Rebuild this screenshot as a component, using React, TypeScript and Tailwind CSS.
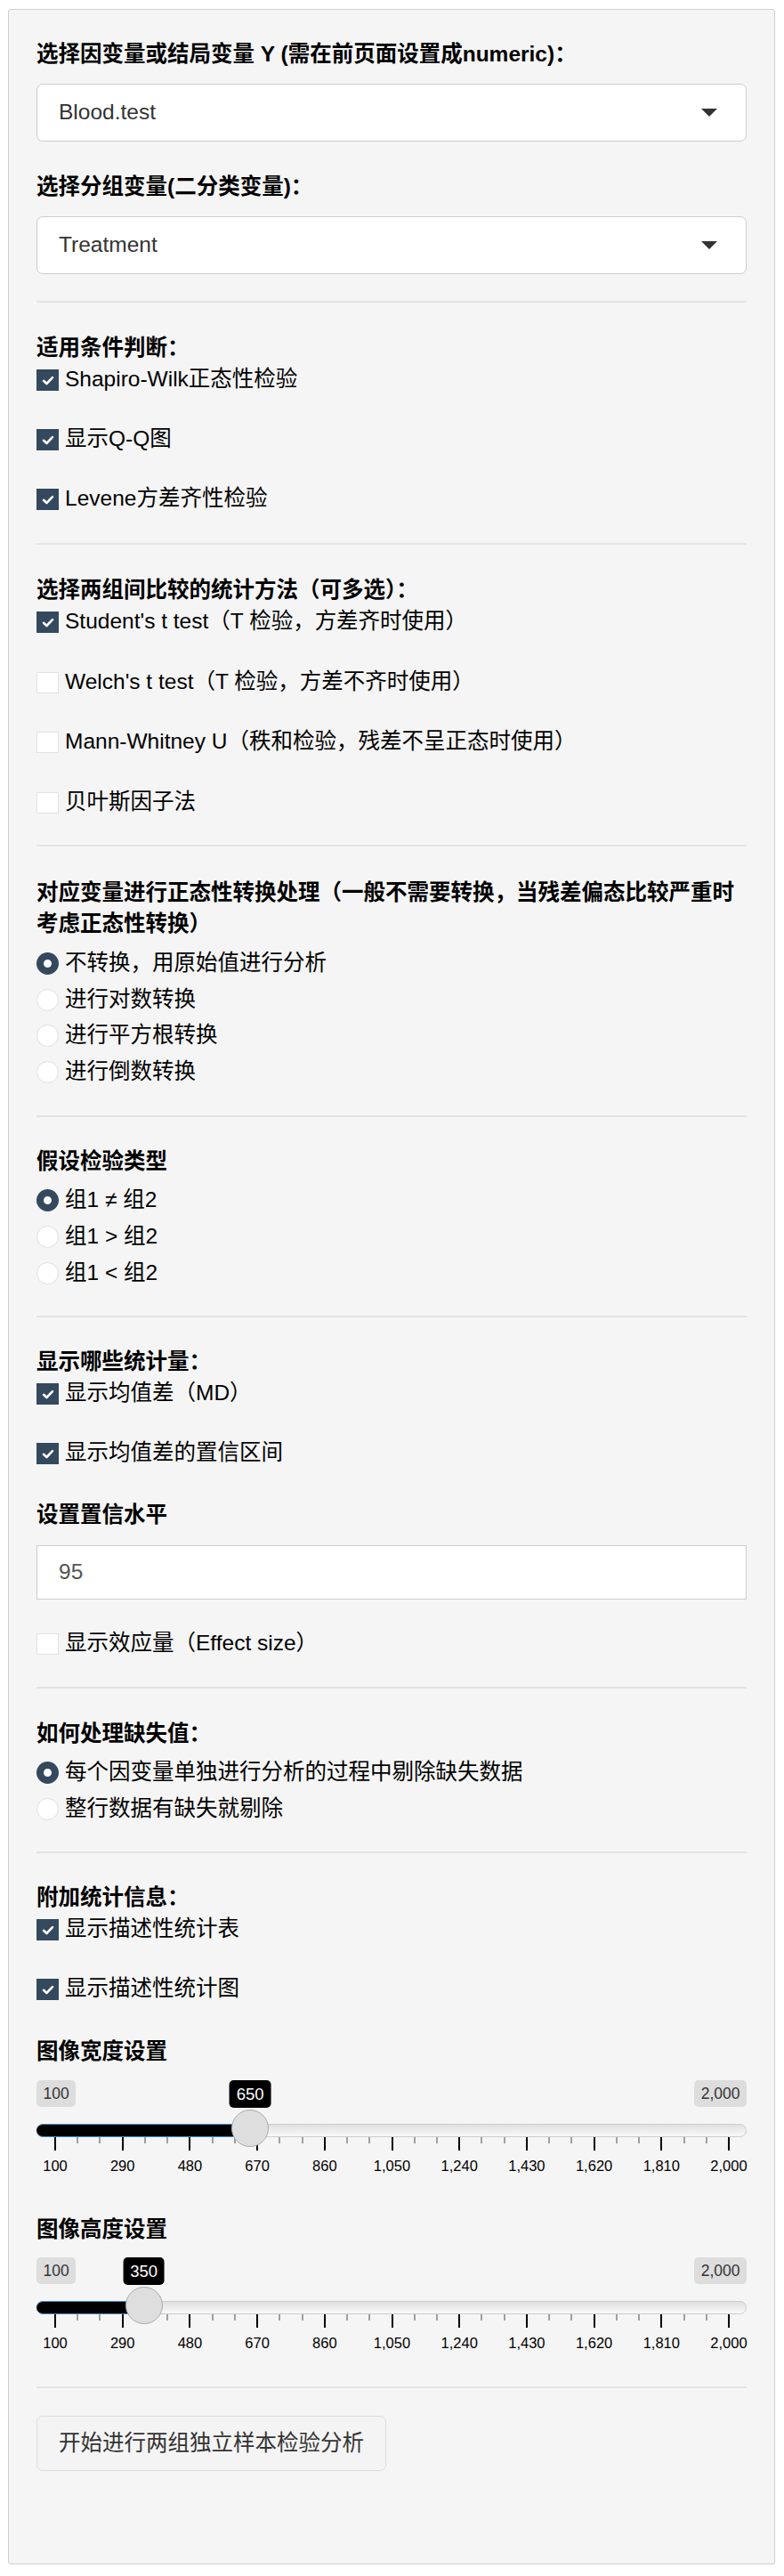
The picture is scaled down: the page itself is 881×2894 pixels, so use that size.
import React from 'react'

const ticks = ['100', '290', '480', '670', '860', '1,050', '1,240', '1,430', '1,620', '1,810', '2,000']

function Heading({ children, className = '' }: { children: React.ReactNode; className?: string }) {
  return <div className={`text-[24.5px] leading-[35px] font-bold text-black ${className}`}>{children}</div>
}

function Rule({ className = '' }: { className?: string }) {
  return <div className={`h-[2px] bg-[#e3e3e3] ${className}`} />
}

function Check({ label, checked }: { label: string; checked?: boolean }) {
  return (
    <div className="flex items-start gap-[7px] h-[35px]">
      <span
        className={`mt-[7px] w-[25px] h-[24px] shrink-0 flex items-center justify-center ${
          checked ? 'bg-[#34495e]' : 'bg-white border border-[#e2e2e2]'
        }`}
      >
        {checked && (
          <svg width="14" height="11" viewBox="0 0 14 11">
            <path d="M2 5.8 L5.4 9 L12 2.2" fill="none" stroke="white" strokeWidth="2.6" strokeLinecap="round" strokeLinejoin="round" />
          </svg>
        )}
      </span>
      <span className="text-[24.5px] leading-[35px] text-black whitespace-nowrap">{label}</span>
    </div>
  )
}

function Radio({ label, on }: { label: string; on?: boolean }) {
  return (
    <div className="flex items-start gap-[7px] h-[35px]">
      <span
        className={`mt-[6px] w-[25px] h-[25px] shrink-0 rounded-full bg-white ${
          on ? 'border-[8px] border-[#34495e]' : 'border border-[#e0e0e0]'
        }`}
      />
      <span className="text-[24.5px] leading-[35px] text-black whitespace-nowrap">{label}</span>
    </div>
  )
}

function Select({ value }: { value: string }) {
  return (
    <div className="h-[65px] flex items-center justify-between bg-white border border-[#cccccc] rounded-[7px] pl-[24px] pr-[32px]">
      <span className="text-[24.5px] text-[#333333]">{value}</span>
      <svg width="18" height="9" viewBox="0 0 18 9">
        <polygon points="0,0 18,0 9,9" fill="#333333" />
      </svg>
    </div>
  )
}

function Slider({ value }: { value: number }) {
  const pos = 21 + ((value - 100) / 1900) * 757
  const step = 757 / 10
  return (
    <div className="relative h-[120px]">
      <span className="absolute left-0 top-0 h-[30px] px-[7.5px] flex items-center rounded-[5px] bg-[#dddddd] text-[17.5px] text-[#333333]">
        100
      </span>
      <span className="absolute right-0 top-0 h-[30px] px-[7.5px] flex items-center rounded-[5px] bg-[#dddddd] text-[17.5px] text-[#333333]">
        2,000
      </span>
      <div className="absolute left-0 right-0 top-[49px] h-[15px] rounded-full border border-[#cccccc] bg-linear-to-b from-[#e0e0e0] to-[#f9f9f9]" />
      <div
        className="absolute left-0 top-[49px] h-[15px] rounded-l-full bg-black border-y border-[#428bca]"
        style={{ width: pos }}
      />
      {ticks.map((t, i) => (
        <React.Fragment key={t}>
          <span className="absolute top-[64px] h-[15px] w-[2px] -translate-x-1/2 bg-black" style={{ left: 21 + i * step }} />
          <span
            className="absolute top-[88px] -translate-x-1/2 text-[16.5px] leading-none text-black whitespace-nowrap"
            style={{ left: 21 + i * step }}
          >
            {t}
          </span>
          {i < 10 && (
            <>
              <span className="absolute top-[64px] h-[7px] w-[2px] -translate-x-1/2 bg-[#a0a0a0]" style={{ left: 21 + i * step + step / 3 }} />
              <span className="absolute top-[64px] h-[7px] w-[2px] -translate-x-1/2 bg-[#a0a0a0]" style={{ left: 21 + i * step + (2 * step) / 3 }} />
            </>
          )}
        </React.Fragment>
      ))}
      <span
        className="absolute top-[33px] w-[42px] h-[42px] -translate-x-1/2 rounded-full bg-[#dedede] border border-[#ababab]"
        style={{ left: pos }}
      />
      <span
        className="absolute top-0 h-[31px] px-[8px] -translate-x-1/2 flex items-center rounded-[5px] bg-black text-white text-[18.5px]"
        style={{ left: pos }}
      >
        {value}
      </span>
    </div>
  )
}

export default function App() {
  return (
    <div className="bg-white pt-[10px] pl-[9px] pr-[10px] pb-[13px] font-['Liberation_Sans','Noto_Sans_CJK_SC',sans-serif]">
      <div className="bg-[#f5f5f5] border border-[#cfcfcf] rounded-[3px] pt-[32px] px-[31px] pb-[104px]">
        <Heading>选择因变量或结局变量 Y (需在前页面设置成numeric)：</Heading>
        <div className="mt-[16px]">
          <Select value="Blood.test" />
        </div>
        <Heading className="mt-[33px]">选择分组变量(二分类变量)：</Heading>
        <div className="mt-[16px]">
          <Select value="Treatment" />
        </div>

        <Rule className="mt-[30px]" />
        <Heading className="mt-[33px]">适用条件判断：</Heading>
        <div className="flex flex-col gap-[32px]">
          <Check label="Shapiro-Wilk正态性检验" checked />
          <Check label="显示Q-Q图" checked />
          <Check label="Levene方差齐性检验" checked />
        </div>

        <Rule className="mt-[33px]" />
        <Heading className="mt-[33px]">选择两组间比较的统计方法（可多选）：</Heading>
        <div className="flex flex-col gap-[32.7px]">
          <Check label="Student's t test（T 检验，方差齐时使用）" checked />
          <Check label="Welch's t test（T 检验，方差不齐时使用）" />
          <Check label="Mann-Whitney U（秩和检验，残差不呈正态时使用）" />
          <Check label="贝叶斯因子法" />
        </div>

        <Rule className="mt-[31px]" />
        <Heading className="mt-[34px]">对应变量进行正态性转换处理（一般不需要转换，当残差偏态比较严重时考虑正态性转换）</Heading>
        <div className="mt-[9px] flex flex-col gap-[5.7px]">
          <Radio label="不转换，用原始值进行分析" on />
          <Radio label="进行对数转换" />
          <Radio label="进行平方根转换" />
          <Radio label="进行倒数转换" />
        </div>

        <Rule className="mt-[32px]" />
        <Heading className="mt-[32px]">假设检验类型</Heading>
        <div className="mt-[8px] flex flex-col gap-[5.7px]">
          <Radio label="组1 ≠ 组2" on />
          <Radio label="组1 > 组2" />
          <Radio label="组1 < 组2" />
        </div>

        <Rule className="mt-[31.6px]" />
        <Heading className="mt-[32px]">显示哪些统计量：</Heading>
        <div className="flex flex-col gap-[32px]">
          <Check label="显示均值差（MD）" checked />
          <Check label="显示均值差的置信区间" checked />
        </div>
        <Heading className="mt-[35px]">设置置信水平</Heading>
        <div className="mt-[17px] h-[61px] flex items-center bg-white border border-[#cccccc] pl-[24px] text-[24.5px] text-[#555555]">
          95
        </div>
        <div className="mt-[31px]">
          <Check label="显示效应量（Effect size）" />
        </div>

        <Rule className="mt-[32px]" />
        <Heading className="mt-[33px]">如何处理缺失值：</Heading>
        <div className="mt-[8px] flex flex-col gap-[5.7px]">
          <Radio label="每个因变量单独进行分析的过程中剔除缺失数据" on />
          <Radio label="整行数据有缺失就剔除" />
        </div>

        <Rule className="mt-[31.3px]" />
        <Heading className="mt-[32px]">附加统计信息：</Heading>
        <div className="flex flex-col gap-[32px]">
          <Check label="显示描述性统计表" checked />
          <Check label="显示描述性统计图" checked />
        </div>

        <Heading className="mt-[36px]">图像宽度设置</Heading>
        <div className="mt-[15px]">
          <Slider value={650} />
        </div>
        <Heading className="mt-[30px]">图像高度设置</Heading>
        <div className="mt-[14px]">
          <Slider value={350} />
        </div>

        <Rule className="mt-[25px]" />
        <button className="mt-[31px] h-[62px] px-[24px] flex items-center bg-[#f4f4f4] border border-[#dddddd] rounded-[7px] text-[24.5px] text-[#333333]">
          开始进行两组独立样本检验分析
        </button>
      </div>
    </div>
  )
}
